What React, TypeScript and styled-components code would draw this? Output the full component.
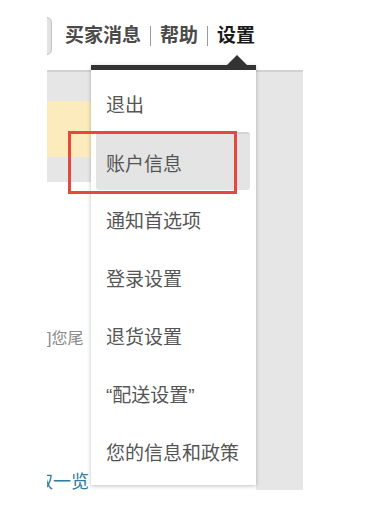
import React from 'react'
import styled, { createGlobalStyle } from 'styled-components'

const GlobalStyle = createGlobalStyle`
  html, body {
    margin: 0;
    padding: 0;
    background: #ffffff;
  }
  body {
    font-family: "Liberation Sans", "Noto Sans CJK SC", sans-serif;
  }
`

const menuItems = [
  '退出',
  '账户信息',
  '通知首选项',
  '登录设置',
  '退货设置',
  '“配送设置”',
  '您的信息和政策',
]

const App: React.FC = () => {
  return (
    <>
      <GlobalStyle />
      <Viewport>
        <Header>
          <ClippedButton />
          <Nav>
            <NavLink>买家消息</NavLink>
            <Separator />
            <NavLink>帮助</NavLink>
            <Separator />
            <NavLink active>设置</NavLink>
          </Nav>
        </Header>
        <Body>
          <MainColumn>
            <Band tone="gray" size={29} />
            <Band tone="yellow" size={56} />
            <Band tone="gray" size={25} />
            <Notice>]您尾</Notice>
            <Rule />
            <MoreLink>取一览</MoreLink>
          </MainColumn>
          <SideColumn />
        </Body>
        <Dropdown>
          { menuItems.map((label, i) =>
            <MenuItem key={ i } selected={ i === 1 }>{ label }</MenuItem>
          ) }
        </Dropdown>
        <Highlight />
      </Viewport>
    </>
  )
}

const Viewport = styled.div`
  position: relative;
  margin-left: 47px;
  width: 256px;
  height: 490px;
  overflow: hidden;
`

const Header = styled.div`
  display: flex;
  align-items: center;
  height: 70px;
  padding-top: 1px;
  box-sizing: border-box;
`

const ClippedButton = styled.div`
  flex: none;
  width: 46px;
  height: 38px;
  margin-left: -41px;
  box-sizing: border-box;
  border: 1px solid #c4c4c4;
  border-radius: 5px;
  background: linear-gradient(to right, #f4f4f4, #e2e2e2);
`

const Nav = styled.div`
  display: flex;
  align-items: center;
  margin-left: 13px;
`

const NavLink = styled.span<{ active?: boolean }>`
  font-size: 19px;
  font-weight: 700;
  line-height: 24px;
  color: ${ p => p.active ? '#1a1a1a' : '#4a4a4a' };
  white-space: nowrap;
`

const Separator = styled.span`
  width: 1px;
  height: 20px;
  margin: 0 9px;
  background: #9a9a9a;
`

const Body = styled.div`
  display: flex;
  height: 420px;
  border-top: 2px solid #d2d2d2;
  box-sizing: border-box;
`

const MainColumn = styled.div`
  flex: 1;
  display: flex;
  flex-direction: column;
`

const Band = styled.div<{ tone: 'gray' | 'yellow', size: number }>`
  flex: none;
  height: ${ p => p.size }px;
  background: ${ p => p.tone === 'yellow' ? '#fcebbd' : '#e6e6e6' };
`

const Notice = styled.div`
  margin-top: 146px;
  font-size: 16px;
  line-height: 22px;
  color: #8a8a8a;
  white-space: nowrap;
`

const Rule = styled.div`
  margin-top: 102px;
  height: 2px;
  background: #8d9999;
`

const MoreLink = styled.div`
  margin-top: 19px;
  margin-left: -12px;
  font-size: 18px;
  line-height: 22px;
  color: #2f7c9c;
  white-space: nowrap;
`

const SideColumn = styled.div`
  width: 47px;
  background: #e6e6e6;
`

const Dropdown = styled.div`
  position: absolute;
  left: 44px;
  top: 65px;
  width: 165px;
  height: 420px;
  box-sizing: border-box;
  padding-top: 4px;
  border-top: 5px solid #333333;
  background: #ffffff;
  box-shadow: 0 1px 4px rgba(0, 0, 0, 0.25);

  &::before {
    content: '';
    position: absolute;
    top: -15px;
    left: 136px;
    border-left: 10px solid transparent;
    border-right: 10px solid transparent;
    border-bottom: 10px solid #333333;
  }
`

const MenuItem = styled.div<{ selected?: boolean }>`
  display: flex;
  align-items: center;
  height: 58px;
  box-sizing: border-box;
  margin: ${ p => p.selected ? '0 6px 0 5px' : '0' };
  padding-left: ${ p => p.selected ? '10px' : '15px' };
  font-size: 19px;
  color: #555555;
  white-space: nowrap;
  border-radius: ${ p => p.selected ? '3px' : '0' };
  background: ${ p => p.selected ? '#e4e4e4' : 'transparent' };
  border-top: ${ p => p.selected ? '2px solid #d4d4d4' : 'none' };
`

const Highlight = styled.div`
  position: absolute;
  left: 21px;
  top: 131px;
  width: 169px;
  height: 63px;
  box-sizing: border-box;
  border: 3px solid #e5483f;
`

export default App
